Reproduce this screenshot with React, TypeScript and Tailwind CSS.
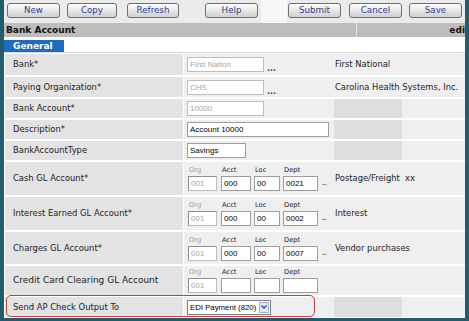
import React from "react";

const Btn = ({ label, className = "" }: { label: string; className?: string }) => (
  <button
    className={`h-[15px] rounded-[3px] border border-[#6e6e6e] bg-linear-to-b from-white to-[#d0d0d0] text-[8.7px] leading-[13px] text-[#263f92] ${className}`}
  >
    {label}
  </button>
);

const Field = ({ value, className = "", muted = false }: { value: string; className?: string; muted?: boolean }) => (
  <div
    className={`h-[15px] shrink-0 overflow-hidden whitespace-nowrap border bg-white pl-[2px] font-['Liberation_Sans',sans-serif] text-[8px] leading-[13px] ${
      muted ? "border-[#bdbdbd] text-[#a5a5a5]" : "border-[#9c9c9c] text-black"
    } ${className}`}
  >
    {value}
  </div>
);

const Row = ({
  label,
  h,
  big = false,
  dark = false,
  desc,
  children,
}: {
  label: string;
  h: string;
  big?: boolean;
  dark?: boolean;
  desc?: string;
  children?: React.ReactNode;
}) => (
  <div className={`relative flex ${h}`}>
    <div className={`ml-px flex w-[178px] items-center bg-[#e3e3e3] pl-[8px] ${big ? "text-[9px]" : "text-[8.4px]"}`}>{label}</div>
    <div className="ml-px flex w-[150px] items-center bg-[#efefef]">{children}</div>
    <div className="flex flex-1 bg-[#efefef]">
      {dark ? (
        <div className="w-[68px] bg-[#dedede]" />
      ) : (
        <div className="flex items-center whitespace-nowrap pl-px text-[8.4px]">{desc}</div>
      )}
    </div>
  </div>
);

const Sub = ({ label, muted = false }: { label: string; muted?: boolean }) => (
  <div className={`mb-[2px] pl-px text-[6.7px] leading-[8px] ${muted ? "text-[#9a9a9a]" : "text-[#222]"}`}>{label}</div>
);

const GL = ({ acct, loc, dept }: { acct: string; loc: string; dept: string }) => (
  <div className="flex items-end pl-[4px]">
    <div className="flex flex-col">
      <Sub label="Org" muted />
      <Field value="001" muted className="h-[14px] w-[29px] border-t-[#8f8f8f] border-l-[#8f8f8f] leading-[12px]" />
    </div>
    <div className="ml-[4px] flex flex-col">
      <Sub label="Acct" />
      <Field value={acct} className="h-[14px] w-[30px] leading-[12px]" />
    </div>
    <div className="ml-[3px] flex flex-col">
      <Sub label="Loc" />
      <Field value={loc} className="h-[14px] w-[26px] leading-[12px]" />
    </div>
    <div className="ml-[3px] flex flex-col">
      <Sub label="Dept" />
      <Field value={dept} className="h-[14px] w-[35px] leading-[12px]" />
    </div>
    {acct !== "" && <span className="mb-[5px] ml-[4px] text-[6px] font-bold leading-[6px] text-[#444]">..</span>}
  </div>
);

const Dots = () => <span className="ml-[3px] self-end text-[8px] font-bold leading-[6px] text-[#444]">...</span>;

export default function App() {
  return (
    <div className="flex h-[321px] w-[469px] flex-col overflow-hidden border-x-4 border-b-[3px] border-[#225d6f] font-['DejaVu_Sans',Verdana,sans-serif] text-[#222]">
      <div className="flex h-[23px] items-start bg-[#ebebeb] pl-[3px] pt-[3px]">
        <Btn label="New" className="w-[53px]" />
        <Btn label="Copy" className="ml-[7px] w-[50px]" />
        <Btn label="Refresh" className="ml-[10px] w-[52px]" />
        <Btn label="Help" className="ml-[26px] w-[53px]" />
        <div className="-mt-[3px] ml-[3px] h-[23px] w-[26px] bg-[#f7f7f7]" />
        <Btn label="Submit" className="ml-px w-[53px]" />
        <Btn label="Cancel" className="ml-[8px] w-[53px]" />
        <Btn label="Save" className="ml-[7px] w-[53px]" />
      </div>
      <div className="flex h-[14px] bg-[#bdbdbd] text-[9px] font-bold leading-[14px] text-[#111]">
        <div className="w-[352px] pl-[2px]">Bank Account</div>
        <div className="w-px bg-[#e2e2e2]" />
        <div className="flex-1 overflow-hidden text-right">edi</div>
      </div>
      <div className="h-[15px] bg-white pt-[3px]">
        <div className="h-[12px] w-[60px] bg-[#1c6cc0] pl-[9px] text-[9px] font-bold leading-[12px] text-white">General</div>
      </div>
      <div className="h-px bg-[#d6d6d6]" />
      <div className="flex flex-1 flex-col gap-[2px] bg-white pt-px">
        <Row label="Bank*" h="h-[21px]" desc="First National">
          <div className="flex items-end pl-[3px]">
            <Field value="First Nation" muted className="w-[77px]" />
            <Dots />
          </div>
        </Row>
        <Row label="Paying Organization*" h="h-[20px]" desc="Carolina Health Systems, Inc.">
          <div className="flex items-end pl-[3px]">
            <Field value="CHS" muted className="w-[77px]" />
            <Dots />
          </div>
        </Row>
        <Row label="Bank Account*" h="h-[19px]" dark>
          <div className="pl-[3px]">
            <Field value="10000" muted className="w-[77px]" />
          </div>
        </Row>
        <Row label="Description*" h="h-[19px]" dark>
          <div className="pl-[3px]">
            <Field value="Account 10000" className="w-[142px]" />
          </div>
        </Row>
        <Row label="BankAccountType" h="h-[19px]" dark>
          <div className="pl-[3px]">
            <Field value="Savings" className="w-[59px]" />
          </div>
        </Row>
        <Row label="Cash GL Account*" h="h-[33px]" desc={"Postage/Freight\u00a0 xx"}>
          <GL acct="000" loc="00" dept="0021" />
        </Row>
        <Row label="Interest Earned GL Account*" h="h-[33px]" desc="Interest">
          <GL acct="000" loc="00" dept="0002" />
        </Row>
        <Row label="Charges GL Account*" h="h-[32px]" desc="Vendor purchases">
          <GL acct="000" loc="00" dept="0007" />
        </Row>
        <Row label="Credit Card Clearing GL Account" h="h-[29px]" big>
          <GL acct="" loc="" dept="" />
        </Row>
        <Row label="Send AP Check Output To" h="h-[20px]" dark>
          <div className="pl-[3px]">
            <div className="flex h-[15px] w-[84px] border border-[#7f7f7f] bg-white">
              <div className="flex-1 whitespace-nowrap pl-[2px] font-['Liberation_Sans',sans-serif] text-[7.8px] leading-[13px] text-black">
                EDI Payment (820)
              </div>
              <div className="m-px flex w-[10px] items-center justify-center border border-[#9fb0cf] bg-[#dfe8f5]">
                <svg width="6" height="4" viewBox="0 0 6 4">
                  <path d="M0.5 0.5 L3 3 L5.5 0.5" fill="none" stroke="#2a4a9a" strokeWidth="1.4" />
                </svg>
              </div>
            </div>
          </div>
          <div className="pointer-events-none absolute -top-[2px] left-[2px] h-[22px] w-[309px] rounded-[5px] border border-[#c83c3c]" />
        </Row>
      </div>
    </div>
  );
}
